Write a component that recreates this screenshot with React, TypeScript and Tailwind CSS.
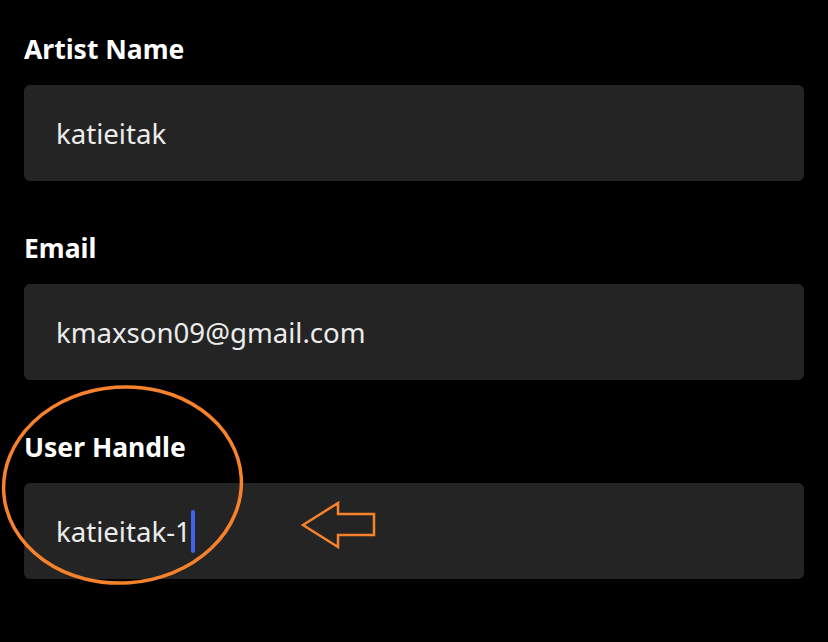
import React from "react";

const Field = ({ label, value, caret }: { label: string; value: string; caret?: boolean }) => {
  return (
    <div className="flex flex-col">
      <label className="text-[26.5px] leading-[38px] font-bold text-white">{label}</label>
      <div className="mt-[17px] flex h-24 items-center rounded-md bg-[#242424] px-8">
        <span className="text-[27.6px] leading-[38px] text-[#ececec]">{value}</span>
        {caret && <span className="h-[43px] w-[4px] rounded-full bg-[#3f62ef]" />}
      </div>
    </div>
  );
};

const App = () => {
  return (
    <div
      className="relative h-[642px] w-[828px] overflow-hidden bg-black px-6 pt-[30px]"
      style={{ fontFamily: '"Noto Sans", "Open Sans", sans-serif' }}
    >
      <div className="flex flex-col gap-12">
        <Field label="Artist Name" value="katieitak" />
        <Field label="Email" value="kmaxson09@gmail.com" />
        <Field label="User Handle" value="katieitak-1" caret />
      </div>

      {/* annotation overlay */}
      <svg className="pointer-events-none absolute left-0 top-0" width="828" height="642">
        <ellipse
          cx="122.5"
          cy="485"
          rx="119"
          ry="98"
          fill="none"
          stroke="#f7822b"
          strokeWidth="3.5"
          transform="rotate(-4 122.5 485)"
        />
        <polygon
          points="303,525 338,503 338,514 374,514 374,535 338,535 338,547"
          fill="none"
          stroke="#f7822b"
          strokeWidth="2.5"
          strokeLinejoin="miter"
        />
      </svg>
    </div>
  );
};

export default App;
